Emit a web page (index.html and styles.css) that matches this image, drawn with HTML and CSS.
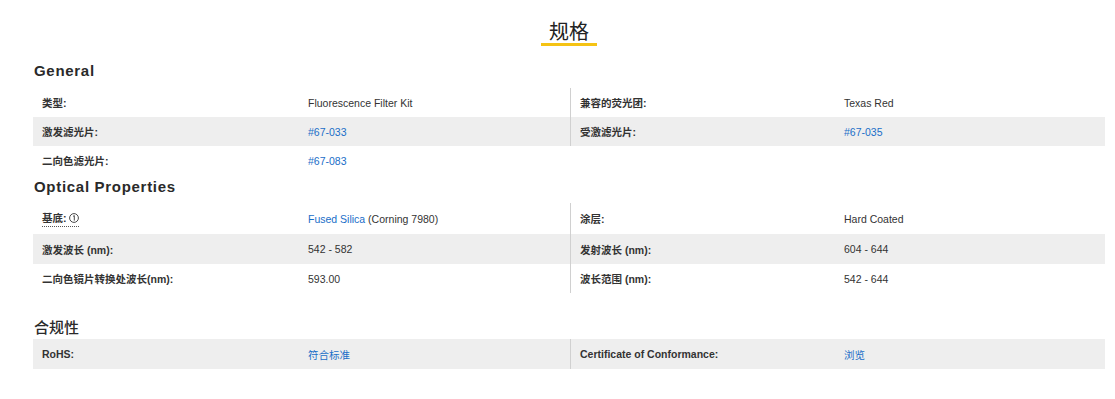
FILE: index.html
```html
<!DOCTYPE html>
<html lang="zh">
<head>
<meta charset="utf-8">
<title>规格</title>
<link rel="stylesheet" href="styles.css">
</head>
<body>
<div class="page">
  <div class="title-wrap"><h2 class="title">规格</h2></div>

  <h3 class="section-head head-general">General</h3>
  <div class="spec-table t1">
    <div class="row">
      <div class="cell label">类型:</div>
      <div class="cell value">Fluorescence Filter Kit</div>
      <div class="cell label divided">兼容的荧光团:</div>
      <div class="cell value">Texas Red</div>
    </div>
    <div class="row shaded">
      <div class="cell label">激发滤光片:</div>
      <div class="cell value"><a class="link">#67-033</a></div>
      <div class="cell label divided">受激滤光片:</div>
      <div class="cell value"><a class="link">#67-035</a></div>
    </div>
    <div class="row">
      <div class="cell label">二向色滤光片:</div>
      <div class="cell value"><a class="link">#67-083</a></div>
      <div class="cell label"></div>
      <div class="cell value"></div>
    </div>
  </div>

  <h3 class="section-head head-optical">Optical Properties</h3>
  <div class="spec-table t2">
    <div class="row tall">
      <div class="cell label"><span class="tip">基底: <svg class="info" width="10" height="10" viewBox="0 0 10 10"><circle cx="5" cy="5" r="4.4" fill="none" stroke="#333" stroke-width="0.9"/><path d="M4.1 3.3 L5.3 2.6 L5.3 7.6" fill="none" stroke="#333" stroke-width="0.9"/></svg></span></div>
      <div class="cell value"><span><a class="link">Fused Silica</a> (Corning 7980)</span></div>
      <div class="cell label divided">涂层:</div>
      <div class="cell value">Hard Coated</div>
    </div>
    <div class="row shaded">
      <div class="cell label">激发波长 (nm):</div>
      <div class="cell value">542 - 582</div>
      <div class="cell label divided">发射波长 (nm):</div>
      <div class="cell value">604 - 644</div>
    </div>
    <div class="row">
      <div class="cell label">二向色镜片转换处波长(nm):</div>
      <div class="cell value">593.00</div>
      <div class="cell label divided">波长范围 (nm):</div>
      <div class="cell value">542 - 644</div>
    </div>
  </div>

  <h3 class="section-head head-compliance">合规性</h3>
  <div class="spec-table t3">
    <div class="row shaded">
      <div class="cell label">RoHS:</div>
      <div class="cell value"><a class="link">符合标准</a></div>
      <div class="cell label divided">Certificate of Conformance:</div>
      <div class="cell value"><a class="link">浏览</a></div>
    </div>
  </div>
</div>
</body>
</html>
```

FILE: styles.css
```css
* { box-sizing: border-box; }
html, body { margin: 0; padding: 0; background: #fff; }
body {
  font-family: "Liberation Sans", "Noto Sans CJK SC", sans-serif;
  color: #333;
  font-size: 10.5px;
}
.page {
  width: 1072px;
  margin-left: 33px;
}
.title-wrap {
  display: flex;
  justify-content: center;
  padding-top: 19px;
}
.title {
  margin: 0;
  font-family: "Noto Sans CJK SC", sans-serif;
  font-weight: 400;
  font-size: 20px;
  line-height: 24px;
  padding: 0 8px;
  color: #222;
  border-bottom: 3px solid #f5c314;
}
.section-head {
  margin: 0;
  font-size: 15px;
  line-height: 18px;
  font-weight: 700;
  letter-spacing: 0.7px;
  color: #2a2a2a;
  padding-left: 1px;
}
.head-general { margin-top: 16px; margin-bottom: 8px; }
.head-optical { margin-top: 3px; margin-bottom: 7px; }
.head-compliance {
  margin-top: 25px;
  margin-bottom: 3px;
  font-family: "Noto Sans CJK SC", sans-serif;
  font-weight: 500;
  letter-spacing: 0;
}
.spec-table { display: flex; flex-direction: column; }
.row {
  display: grid;
  grid-template-columns: 266px 271px 265px 1fr;
  height: 29px;
}
.t2 .row, .t3 .row { height: 30px; }
.t2 .row.tall { height: 31px; }
.t2 .row:last-child { height: 29px; }
.row.shaded { background: #eeeeee; }
.cell {
  display: flex;
  align-items: center;
  padding-left: 9px;
  white-space: nowrap;
}
.cell.divided { border-left: 1px solid #d0d0d0; padding-left: 9px; }
.label { font-weight: 700; }
.value { font-weight: 400; }
.link { color: #1a6ec8; text-decoration: none; }
.tip {
  display: inline-flex;
  align-items: center;
  gap: 2px;
  border-bottom: 1px dotted #555;
  padding-bottom: 1px;
}
.info { display: block; }
```
